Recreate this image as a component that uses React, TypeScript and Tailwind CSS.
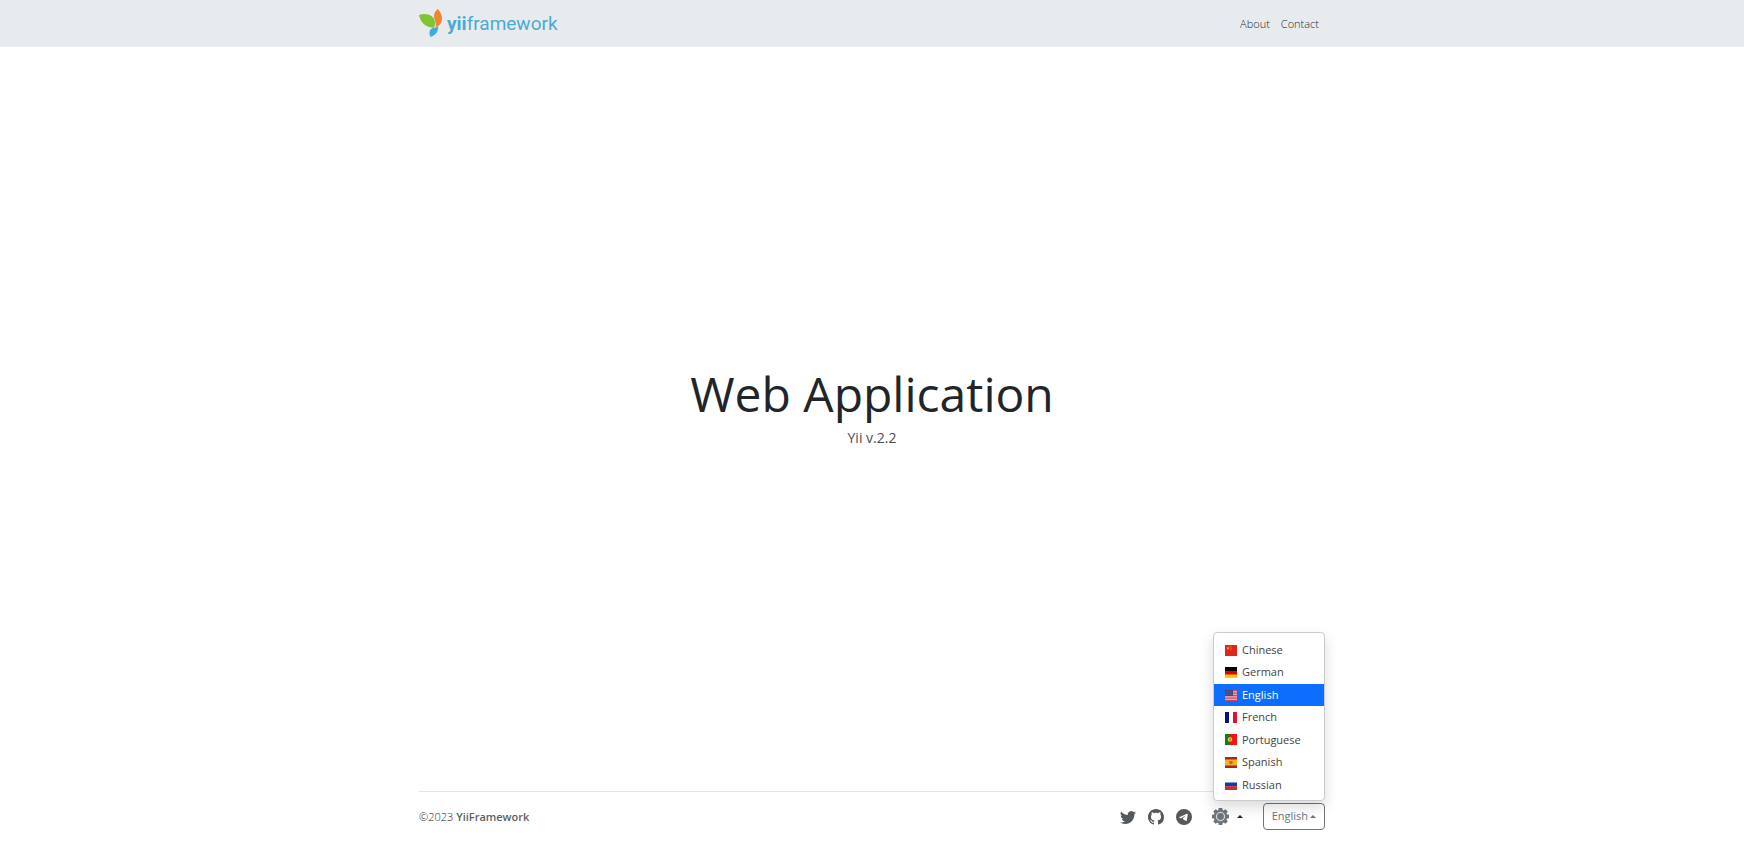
import { useState } from "react";
import type { ReactNode } from "react";
import { BsGithub, BsTelegram, BsTwitter } from "react-icons/bs";

function Flag({ children }: { children: ReactNode }) {
  return (
    <svg viewBox="0 0 12 11" className="h-[11px] w-3 shrink-0" aria-hidden="true">
      {children}
    </svg>
  );
}

const languages: { name: string; flag: ReactNode }[] = [
  {
    name: "Chinese",
    flag: (
      <>
        <rect width="12" height="11" fill="#e0261c" />
        <path d="M3 1.4l.5 1.2 1.3.1-1 .8.4 1.3L3 4.1l-1.2.7.4-1.3-1-.8 1.3-.1z" fill="#f5a623" />
        <circle cx="5.7" cy="1.3" r=".5" fill="#f5a623" />
        <circle cx="6.6" cy="2.9" r=".5" fill="#f5a623" />
        <circle cx="5.7" cy="4.6" r=".5" fill="#f5a623" />
      </>
    ),
  },
  {
    name: "German",
    flag: (
      <>
        <rect width="12" height="4" fill="#000" />
        <rect y="4" width="12" height="4" fill="#e00000" />
        <rect y="7.5" width="12" height="3.5" fill="#ffc800" />
      </>
    ),
  },
  {
    name: "English",
    flag: (
      <>
        <rect width="12" height="11" fill="#e3a3ad" />
        <path d="M0 .6h12M0 3.1h12M0 5.6h12M0 8.1h12M0 10.5h12" stroke="#c9445a" strokeWidth="1" />
        <rect width="8" height="6" fill="#44487c" />
        <path d="M1 1.5h6M1 3h6M1 4.5h6" stroke="#8085aa" strokeWidth=".5" strokeDasharray=".6 .8" />
      </>
    ),
  },
  {
    name: "French",
    flag: (
      <>
        <rect width="12" height="11" fill="#fff" />
        <rect width="4" height="11" fill="#00157a" />
        <rect x="8" width="4" height="11" fill="#e3122d" />
      </>
    ),
  },
  {
    name: "Portuguese",
    flag: (
      <>
        <rect width="12" height="11" fill="#f01414" />
        <rect width="5" height="11" fill="#137d1e" />
        <circle cx="5" cy="5.5" r="2.3" fill="#f3d33c" />
        <rect x="4" y="4.3" width="2" height="2.4" rx=".6" fill="#e8703c" />
      </>
    ),
  },
  {
    name: "Spanish",
    flag: (
      <>
        <rect width="12" height="11" fill="#b41f22" />
        <rect y="2.5" width="12" height="6" fill="#f3b51b" />
        <rect x="4.5" y="4" width="3" height="3" rx=".6" fill="#b96a22" />
      </>
    ),
  },
  {
    name: "Russian",
    flag: (
      <>
        <rect width="12" height="4" fill="#fbfbfb" />
        <rect y="3.5" width="12" height="4" fill="#0c3bae" />
        <rect y="7.3" width="12" height="3.7" fill="#d62a26" />
      </>
    ),
  },
];

function Logo() {
  return (
    <a href="#home" className="flex items-center gap-1 text-[#4baad3]" aria-label="yiiframework">
      <svg viewBox="0 0 24 28" className="h-7 w-6" aria-hidden="true">
        <path d="M0 6C5 4 12 5 14.8 9.5c1.7 2.8 1.4 5.7.3 9.2C8 18.3 2 15.5 0 6z" fill="#7fc531" />
        <path d="M18.8 0c5 5 5.6 12.2 1.4 16.3-1 1-2.2 1.6-3.6 1.9.3-2.7.2-5.4-.9-7.700C14 7 15.4 2.5 18.8 0z" fill="#ef8636" />
        <path d="M19.2 17.3c.4 5-2.5 9.2-7.6 10.7-2.2-4-1.2-7.6 2.4-9.2 1.9.2 3.7-.3 5.2-1.5z" fill="#41aed8" />
      </svg>
      <span className="pt-0.5 font-['Roboto','Liberation_Sans',sans-serif] text-[19px] leading-7">
        <span className="font-bold">yii</span>framework
      </span>
    </a>
  );
}

function SunIcon() {
  return (
    <svg viewBox="0 0 16 16" className="size-[17px]" aria-hidden="true">
      <g fill="#6c757d">
        <path d="M6.300 0h3.400l.5 3H5.800zM6.300 16h3.400l.5-3H5.800zM0 6.300v3.400l3 .5V5.800zM16 6.300v3.400l-3 .5V5.800z" />
        <path d="M1.200 3.400l2.200-2.200 2.500 1.600-3.100 3.100zM14.800 3.400l-2.200-2.200-2.500 1.600 3.100 3.100zM1.200 12.600l2.200 2.200 2.500-1.600-3.100-3.100zM14.800 12.600l-2.200 2.200-2.500-1.600 3.100-3.100z" />
        <circle cx="8" cy="8" r="6.200" />
      </g>
      <circle cx="8" cy="8" r="3.800" fill="none" stroke="#d3d7db" strokeWidth="1.200" />
    </svg>
  );
}

function Caret() {
  return (
    <svg viewBox="0 0 6 3" className="h-[3px] w-1.5" fill="currentColor" aria-hidden="true">
      <path d="M0 3L3 0l3 3z" />
    </svg>
  );
}

export default function App() {
  const [open, setOpen] = useState(true);
  const [language, setLanguage] = useState("English");

  return (
    <div className="flex min-h-screen flex-col bg-white font-['Open_Sans','Noto_Sans',sans-serif] text-[#212529]">
      <header className="border-b border-[#edf0f2] bg-[#e7ebee]">
        <div className="mx-auto flex h-[46px] w-full max-w-[906px] items-center justify-between">
          <Logo />
          <nav className="flex gap-[11px] pt-0.5 pr-1.5 text-[11px] font-light text-[#25282b]">
            <a href="#about">About</a>
            <a href="#contact">Contact</a>
          </nav>
        </div>
      </header>

      <main className="flex flex-1 flex-col items-center justify-center pb-6 text-center">
        <h1 className="text-5xl leading-[60px]">Web Application</h1>
        <p className="pt-0.5 text-sm leading-6 text-[#4a4e52]">Yii v.2.2</p>
      </main>

      <footer className="mx-auto w-full max-w-[906px] border-t border-[#e3e5e7] pt-[11px] pb-[27px] text-[11px] text-[#5c6165]">
        <div className="flex items-center justify-between">
          <p className="pt-0.5 font-light text-[#25282b]">
            ©2023 <strong className="font-semibold text-[#5c6165]">YiiFramework</strong>
          </p>
          <div className="flex items-center">
            <div className="flex gap-3 text-base text-[#55595c]">
              <a href="#twitter" aria-label="Twitter"><BsTwitter /></a>
              <a href="#github" aria-label="GitHub"><BsGithub /></a>
              <a href="#telegram" aria-label="Telegram"><BsTelegram /></a>
            </div>
            <button type="button" aria-label="Theme" className="mr-5 ml-5 flex items-center gap-2 text-[#212529]">
              <SunIcon />
              <Caret />
            </button>
            <div className="relative">
              <button
                type="button"
                aria-expanded={open}
                onClick={() => setOpen(!open)}
                className="flex h-[27px] items-center gap-0.5 rounded border border-[#6c757d] px-2 text-[#6c757d]"
              >
                {language}
                <Caret />
              </button>
              {open && (
                <ul className="absolute right-0 bottom-full mb-[2px] grid h-[169px] w-28 grid-rows-7 rounded border border-[#c9cbcd] bg-white pt-1.5 pb-1 shadow-[0_6px_14px_rgba(0,0,0,0.15)]">
                  {languages.map(({ name, flag }) => (
                    <li key={name} className="flex">
                      <button
                        type="button"
                        onClick={() => setLanguage(name)}
                        className={
                          name === language
                            ? "flex flex-1 items-center gap-[5px] bg-[#0d6efd] px-[11px] text-white"
                            : "flex flex-1 items-center gap-[5px] px-[11px] text-[#3f4346]"
                        }
                      >
                        <Flag>{flag}</Flag>
                        {name}
                      </button>
                    </li>
                  ))}
                </ul>
              )}
            </div>
          </div>
        </div>
      </footer>
    </div>
  );
}
